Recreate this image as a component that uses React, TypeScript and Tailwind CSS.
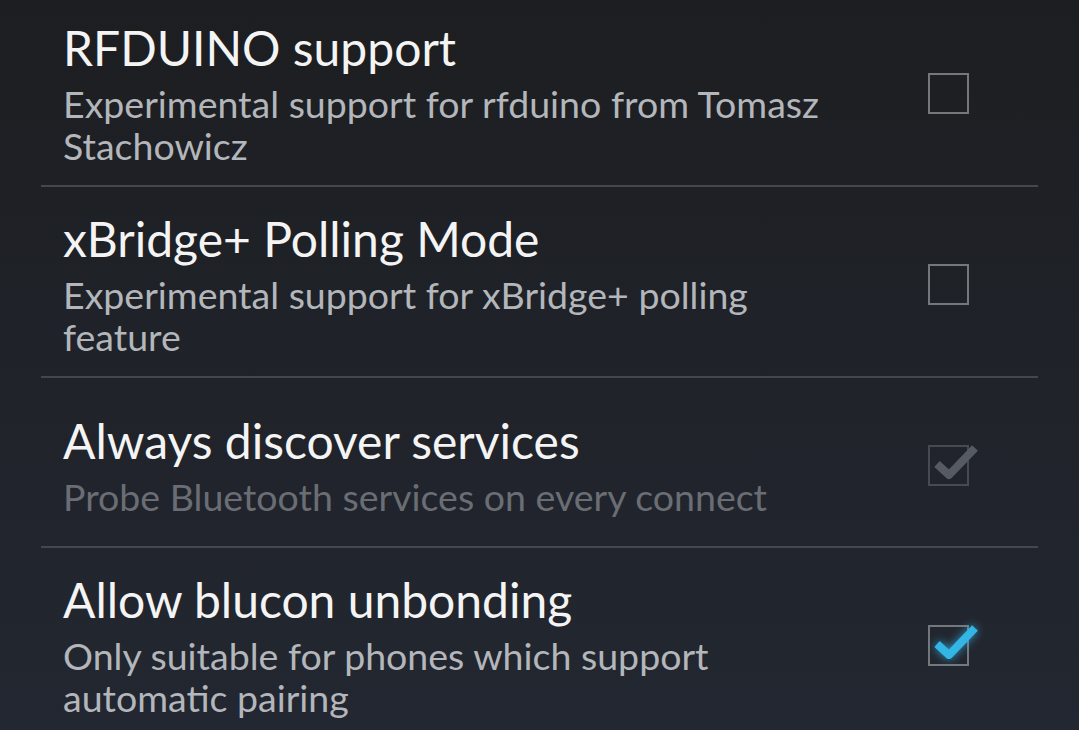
import React from 'react';

type Pref = {
  title: string;
  summary: string;
  checked: boolean;
  enabled: boolean;
};

const prefs: Pref[] = [
  {
    title: 'RFDUINO support',
    summary: 'Experimental support for rfduino from Tomasz Stachowicz',
    checked: false,
    enabled: true,
  },
  {
    title: 'xBridge+ Polling Mode',
    summary: 'Experimental support for xBridge+ polling feature',
    checked: false,
    enabled: true,
  },
  {
    title: 'Always discover services',
    summary: 'Probe Bluetooth services on every connect',
    checked: true,
    enabled: false,
  },
  {
    title: 'Allow blucon unbonding',
    summary: 'Only suitable for phones which support automatic pairing',
    checked: true,
    enabled: true,
  },
];

// Holo-style checkbox: grey square, tick drawn over it and spilling out top-right
function HoloCheckbox({ checked, enabled }: { checked: boolean; enabled: boolean }) {
  return (
    <div
      className={`relative w-[41px] h-[41px] border-2 ${
        enabled ? 'border-[#74777c]' : 'border-[#464a51]'
      }`}
    >
      {checked && (
        <svg
          className={`absolute left-[-2px] top-[-8px] ${
            enabled ? 'drop-shadow-[0_0_5px_rgba(51,181,229,0.8)]' : ''
          }`}
          width="56"
          height="52"
          viewBox="0 0 56 52"
        >
          <polyline
            points="9,25 21,36 47,9"
            fill="none"
            stroke={enabled ? '#33b5e5' : '#565b63'}
            strokeWidth="8"
            strokeLinecap="butt"
            strokeLinejoin="round"
          />
        </svg>
      )}
    </div>
  );
}

export default function App() {
  return (
    <div
      className="w-full h-[730px] overflow-hidden bg-gradient-to-b from-[#1c1e21] to-[#232731]"
      style={{ fontFamily: 'Lato, "Open Sans", sans-serif' }}
    >
      <div className="mx-[41px] -mt-[4px]">
        {prefs.map((p, i) => (
          <div
            key={p.title}
            className={`flex items-center min-h-[170px] pl-[22px] pt-[24px] pb-[18px] ${
              i < prefs.length - 1 ? 'border-b-2 border-[#44474d]' : ''
            }`}
          >
            <div className="w-[790px]">
              <div className="text-[48px] leading-[56px] mb-[7px] text-[#f4f4f4]">{p.title}</div>
              <div
                className={`text-[37.5px] leading-[42px] ${
                  p.enabled ? 'text-[#b3b6ba]' : 'text-[#6a6e74]'
                }`}
              >
                {p.summary}
              </div>
            </div>
            <div className="ml-auto mr-[69px]">
              <HoloCheckbox checked={p.checked} enabled={p.enabled} />
            </div>
          </div>
        ))}
      </div>
    </div>
  );
}
